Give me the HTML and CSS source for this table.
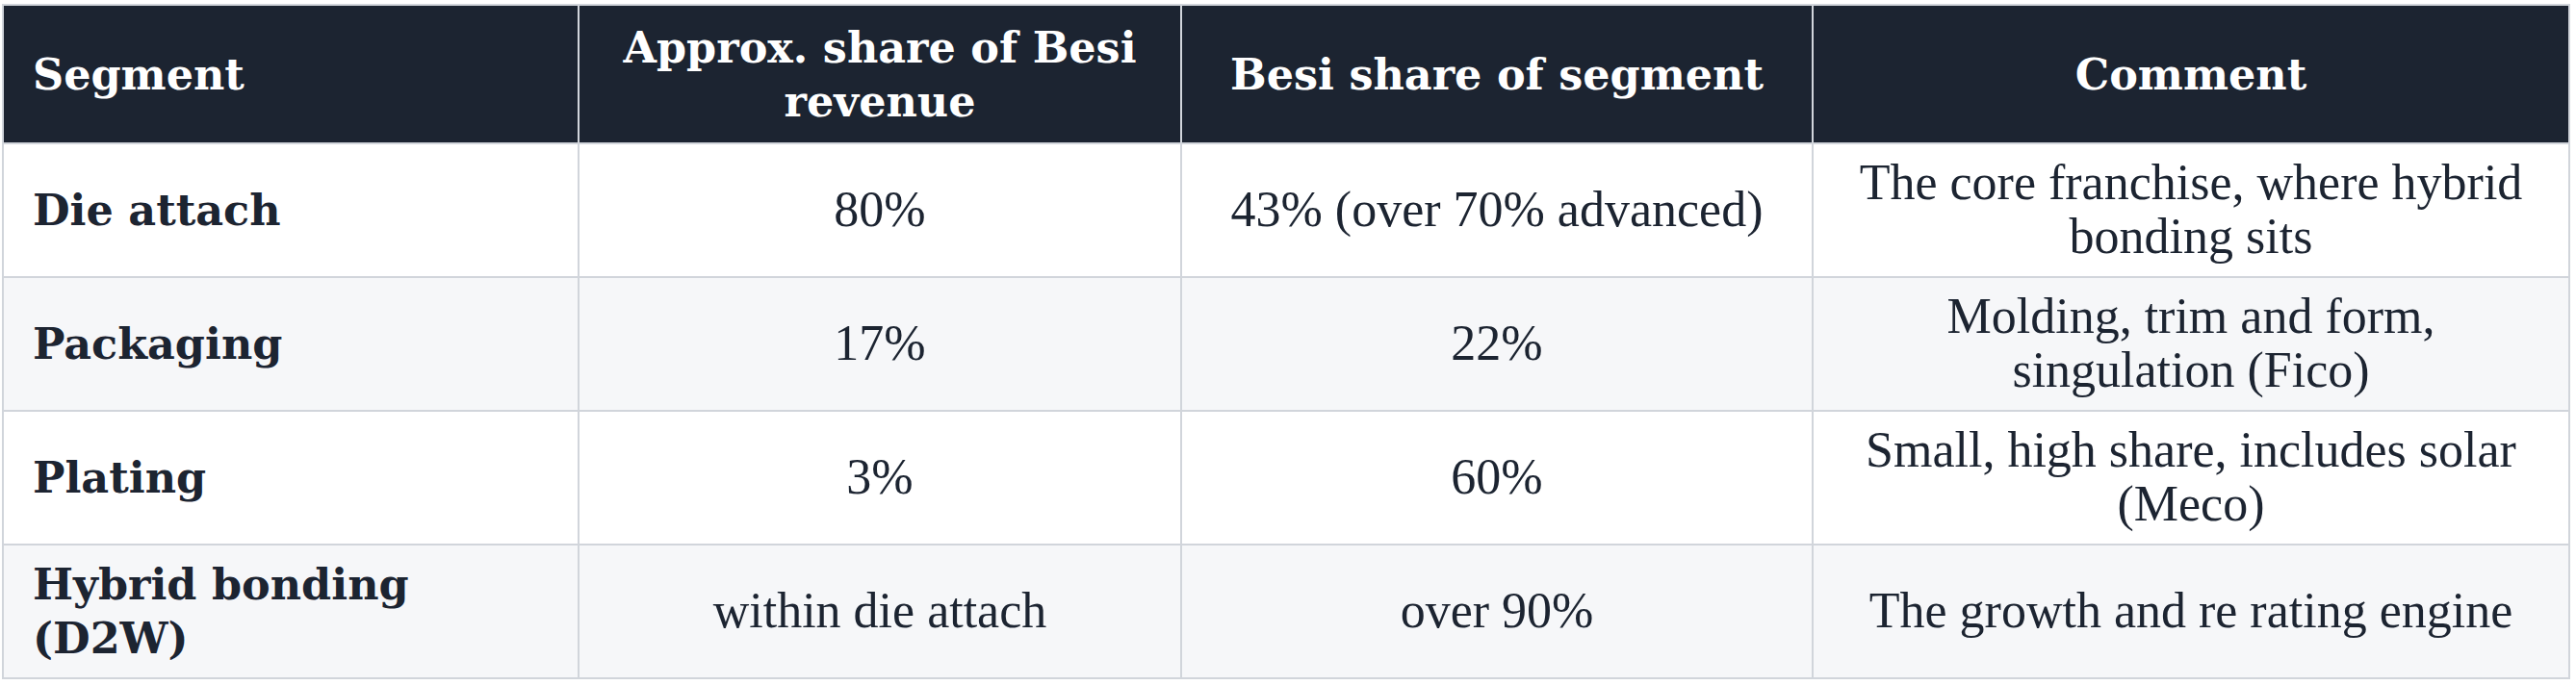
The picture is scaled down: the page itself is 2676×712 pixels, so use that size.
FILE: index.html
```html
<!DOCTYPE html>
<html lang="en">
<head>
<meta charset="utf-8">
<title>Besi segments</title>
<link rel="stylesheet" href="styles.css">
</head>
<body>
<div class="wrap">
  <table class="seg-table">
    <colgroup>
      <col class="c1">
      <col class="c2">
      <col class="c3">
      <col class="c4">
    </colgroup>
    <thead>
      <tr>
        <th class="first">Segment</th>
        <th>Approx. share of Besi revenue</th>
        <th>Besi share of segment</th>
        <th>Comment</th>
      </tr>
    </thead>
    <tbody>
      <tr>
        <td class="first">Die attach</td>
        <td>80%</td>
        <td>43% (over 70% advanced)</td>
        <td>The core franchise, where hybrid bonding sits</td>
      </tr>
      <tr class="alt">
        <td class="first">Packaging</td>
        <td>17%</td>
        <td>22%</td>
        <td>Molding, trim and form, singulation (Fico)</td>
      </tr>
      <tr>
        <td class="first">Plating</td>
        <td>3%</td>
        <td>60%</td>
        <td>Small, high share, includes solar (Meco)</td>
      </tr>
      <tr class="alt">
        <td class="first">Hybrid bonding (D2W)</td>
        <td>within die attach</td>
        <td>over 90%</td>
        <td>The growth and re rating engine</td>
      </tr>
    </tbody>
  </table>
</div>
</body>
</html>
```
FILE: styles.css
```css
html, body {
  margin: 0;
  padding: 0;
  background: #ffffff;
}

.wrap {
  padding: 4px 6px 0 2px;
}

.seg-table {
  width: 100%;
  table-layout: fixed;
  border-collapse: collapse;
  font-family: "Liberation Serif", "Times New Roman", serif;
  font-size: 52px;
  line-height: 56px;
  color: #1c2431;
  border: 2px solid #d1d5db;
}

.c1 { width: 598px; }
.c2 { width: 626px; }
.c3 { width: 656px; }

.seg-table th,
.seg-table td {
  border: 2px solid #d1d5db;
  text-align: center;
  vertical-align: middle;
}

.seg-table th {
  background: #1c2431;
  color: #ffffff;
  font-family: "DejaVu Serif", "Liberation Serif", serif;
  font-size: 44.5px;
  font-weight: 700;
  padding: 15px 30px;
  height: 112px;
}

.seg-table td {
  padding: 12px 30px 13px;
  height: 112px;
  font-weight: 400;
  background: #ffffff;
}

.seg-table tr.alt td {
  background: #f6f7f9;
}

.seg-table th.first,
.seg-table td.first {
  text-align: left;
}

.seg-table td.first {
  font-family: "DejaVu Serif", "Liberation Serif", serif;
  font-size: 44.5px;
  font-weight: 700;
}
```
